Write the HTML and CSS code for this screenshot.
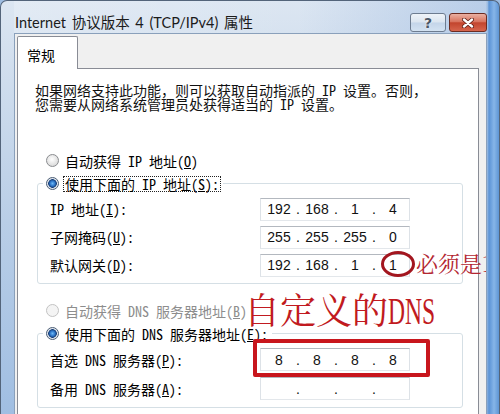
FILE: index.html
```html
<!DOCTYPE html>
<html lang="zh-CN">
<head>
    <meta charset="UTF-8">
    <meta name="viewport" content="width=device-width, initial-scale=1.0">
    <title>Internet 协议版本 4 (TCP/IPv4) 属性</title>
    <link rel="stylesheet" href="styles.css">
</head>
<body>
    <div class="window">
        <div class="titlebar">
            <span class="title">Internet 协议版本 4 (TCP/IPv4) 属性</span>
            <div class="caption-buttons">
                <button class="cap-btn help">?</button>
                <button class="cap-btn close">
                    <svg width="12" height="10" viewBox="0 0 12 10">
                        <path d="M2 1.5 L10 8.5 M10 1.5 L2 8.5" stroke="#5a1c14" stroke-width="4" stroke-linecap="round"/>
                        <path d="M2 1.5 L10 8.5 M10 1.5 L2 8.5" stroke="#fff" stroke-width="2.4" stroke-linecap="round"/>
                    </svg>
                </button>
            </div>
        </div>

        <div class="client">
            <div class="tabs">
                <div class="tab active">常规</div>
            </div>

            <div class="panel">
                <p class="desc">如果网络支持此功能，则可以获取自动指派的 IP 设置。否则，<br>您需要从网络系统管理员处获得适当的 IP 设置。</p>

                <div class="radio-row">
                    <span class="radio"></span>
                    <span class="radio-label">自动获得 IP 地址(<u>O</u>)</span>
                </div>
                <fieldset class="group">
                    <legend class="radio-row">
                        <span class="radio checked"></span>
                        <span class="radio-label focused">使用下面的 IP 地址(<u>S</u>):</span>
                    </legend>
                    <div class="field-row">
                        <label>IP 地址(<u>I</u>):</label>
                        <div class="ip-box">
                            <span class="octet">192</span><span class="dot">.</span><span class="octet">168</span><span class="dot">.</span><span class="octet">1</span><span class="dot">.</span><span class="octet">4</span>
                        </div>
                    </div>
                    <div class="field-row">
                        <label>子网掩码(<u>U</u>):</label>
                        <div class="ip-box">
                            <span class="octet">255</span><span class="dot">.</span><span class="octet">255</span><span class="dot">.</span><span class="octet">255</span><span class="dot">.</span><span class="octet">0</span>
                        </div>
                    </div>
                    <div class="field-row">
                        <label>默认网关(<u>D</u>):</label>
                        <div class="ip-box">
                            <span class="octet">192</span><span class="dot">.</span><span class="octet">168</span><span class="dot">.</span><span class="octet">1</span><span class="dot">.</span><span class="octet">1</span>
                        </div>
                    </div>
                </fieldset>

                <div class="radio-row second">
                    <span class="radio disabled"></span>
                    <span class="radio-label disabled">自动获得 DNS 服务器地址(<u>B</u>)</span>
                </div>
                <fieldset class="group">
                    <legend class="radio-row">
                        <span class="radio checked"></span>
                        <span class="radio-label">使用下面的 DNS 服务器地址(<u>E</u>):</span>
                    </legend>
                    <div class="field-row tall">
                        <label>首选 DNS 服务器(<u>P</u>):</label>
                        <div class="ip-box">
                            <span class="octet">8</span><span class="dot">.</span><span class="octet">8</span><span class="dot">.</span><span class="octet">8</span><span class="dot">.</span><span class="octet">8</span>
                        </div>
                    </div>
                    <div class="field-row tall">
                        <label>备用 DNS 服务器(<u>A</u>):</label>
                        <div class="ip-box">
                            <span class="octet"></span><span class="dot">.</span><span class="octet"></span><span class="dot">.</span><span class="octet"></span><span class="dot">.</span><span class="octet"></span>
                        </div>
                    </div>
                </fieldset>
            </div>

            <!-- red hand-drawn notes on top of the dialog -->
            <span class="mark-circle"></span>
            <span class="note note-gateway">必须是1</span>
            <span class="note note-dns">自定义的<span class="latin">DNS</span></span>
            <span class="mark-box"></span>
        </div>
    </div>
</body>
</html>
```

FILE: styles.css
```css
/* Reset */
* {
    margin: 0;
    padding: 0;
    box-sizing: border-box;
}

body {
    width: 500px;
    height: 414px;
    overflow: hidden;
    background: #9ebde2;
    font-family: "Noto Sans Mono CJK SC", "Noto Sans CJK SC", sans-serif;
    font-size: 14px;
    color: #000;
}

/* Aero window frame */
.window {
    width: 500px;
    height: 414px;
    display: flex;
    flex-direction: column;
    padding: 0 12px 0 13px;
    border: 1px solid #53647a;
    border-bottom: none;
    border-radius: 7px 7px 0 0;
    background:
        linear-gradient(90deg, transparent 485px, #5b93d6 488px, #86b5e8 493px, #5e95d4 498px),
        linear-gradient(180deg, #dce6f2 0, #d2dfee 60px, #b9cee7 220px, #a0bee2 414px);
}

.titlebar {
    height: 32px;
    display: flex;
    align-items: flex-start;
    background: linear-gradient(90deg, rgba(255,255,255,0.2), rgba(255,255,255,0) 60%, rgba(120,160,215,0.35));
}

.title {
    margin-top: 13px;
    padding-left: 1px;
    line-height: 18px;
    font-family: "Lato", "Noto Sans CJK SC", sans-serif;
    font-size: 14.5px;
    word-spacing: 2px;
    color: #1b1b1b;
    white-space: nowrap;
}

.caption-buttons {
    margin-left: auto;
    margin-top: 12px;
    display: flex;
    gap: 3px;
}

.cap-btn {
    height: 19px;
    border-radius: 3px;
    display: flex;
    align-items: center;
    justify-content: center;
    font-family: "DejaVu Sans", sans-serif;
}

.help {
    width: 36px;
    border: 1px solid #6d7c90;
    background: linear-gradient(180deg, #eef3f9 0, #dbe5f0 48%, #c4d5e9 52%, #d3e2f2 100%);
    color: #4a5666;
    font-size: 14px;
    font-weight: bold;
    text-shadow: 0 0 2px #fff;
}

.close {
    width: 38px;
    border: 1px solid #6b2b21;
    background: linear-gradient(180deg, #eab0a2 0, #d8745f 45%, #c2452e 52%, #d6654d 100%);
}

/* Dialog client area */
.client {
    flex: 1;
    position: relative;
    overflow: hidden;
    display: flex;
    flex-direction: column;
    padding: 2px 7px 0 2px;
    background: #f0f0f0;
    border: 1px solid #8aa0bb;
    border-bottom: none;
}

.tabs {
    display: flex;
}

.tab {
    width: 61px;
    height: 33px;
    margin-bottom: -1px;
    padding: 9px 0 0 9px;
    line-height: 18px;
    background: #fff;
    border: 1px solid #898c95;
    border-bottom: none;
    border-radius: 2px 2px 0 0;
    position: relative;
    z-index: 1;
}

.panel {
    flex: 1;
    background: #fff;
    border: 1px solid #898c95;
    border-bottom: none;
    padding: 0 15px 0 17px;
}

.desc {
    margin-top: 14px;
    line-height: 14px;
    color: #111;
}

.radio-row {
    height: 23px;
    display: flex;
    align-items: center;
    padding-left: 11px;
    margin-top: 38px;
}

.radio-row.second {
    margin-top: 15px;
}

.radio {
    width: 13px;
    height: 13px;
    margin-right: 4px;
    border-radius: 50%;
    border: 1px solid #8a8c8f;
    background: radial-gradient(circle at 45% 40%, #ffffff 0, #e9e9e9 45%, #cfcfcf 100%);
}

.radio.checked {
    border-color: #4b5d74;
    background: radial-gradient(circle at 50% 50%, #6cb8f5 0, #2c74c8 2.5px, #163e78 4px, #dfe6ee 4.6px, #f6f6f6 100%);
}

.radio.disabled {
    border-color: #c3c3c3;
    background: #f4f4f4;
}

.radio-label {
    padding: 0 1px;
    line-height: 14px;
    border: 1px solid transparent;
    white-space: nowrap;
}

.radio-label.focused {
    border: 1px dotted #222;
}

.radio-label.disabled {
    color: #8d8d8d;
}

/* Group box with a radio button as its caption */
.group {
    margin-left: 2px;
    border: 1px solid #d5dfe5;
    border-radius: 3px;
    padding: 0 0 4px 12px;
}

.group legend.radio-row {
    margin-top: 0;
    margin-left: -7px;
    padding: 0 2px 0 3px;
}

.field-row {
    display: grid;
    grid-template-columns: 210px 150px;
    align-items: center;
    height: 28px;
}

.field-row.tall {
    height: 29px;
}

.field-row label {
    white-space: nowrap;
}

.ip-box {
    height: 23px;
    display: flex;
    align-items: center;
    padding-left: 3px;
    border: 1px solid;
    border-color: #b3b8bf #dde2e7 #e3e7eb #dde2e7;
    font-family: "Liberation Sans", sans-serif;
    font-size: 14px;
    color: #111;
}

.octet {
    width: 30px;
    text-align: center;
}

.dot {
    width: 8px;
    text-align: center;
}

/* Red annotations */
.mark-circle {
    position: absolute;
    left: 366px;
    top: 217px;
    width: 34px;
    height: 26px;
    border: 3px solid #a3161f;
    border-radius: 50%;
}

.note {
    position: absolute;
    line-height: 1;
    white-space: nowrap;
    font-family: "Noto Serif CJK SC", "Noto Sans CJK SC", serif;
}

.note-gateway {
    left: 401px;
    top: 218px;
    font-size: 22px;
    color: #b32631;
}

.note-dns {
    left: 229px;
    top: 257px;
    font-size: 36px;
    color: #c11a20;
}

.note-dns .latin {
    display: inline-block;
    font-family: "Liberation Serif", serif;
    font-size: 38px;
    transform: scaleX(0.62);
    transform-origin: left center;
}

.mark-box {
    position: absolute;
    left: 238px;
    top: 305px;
    width: 177px;
    height: 38px;
    border: 4px solid #c8161d;
    border-radius: 2px;
}
```
